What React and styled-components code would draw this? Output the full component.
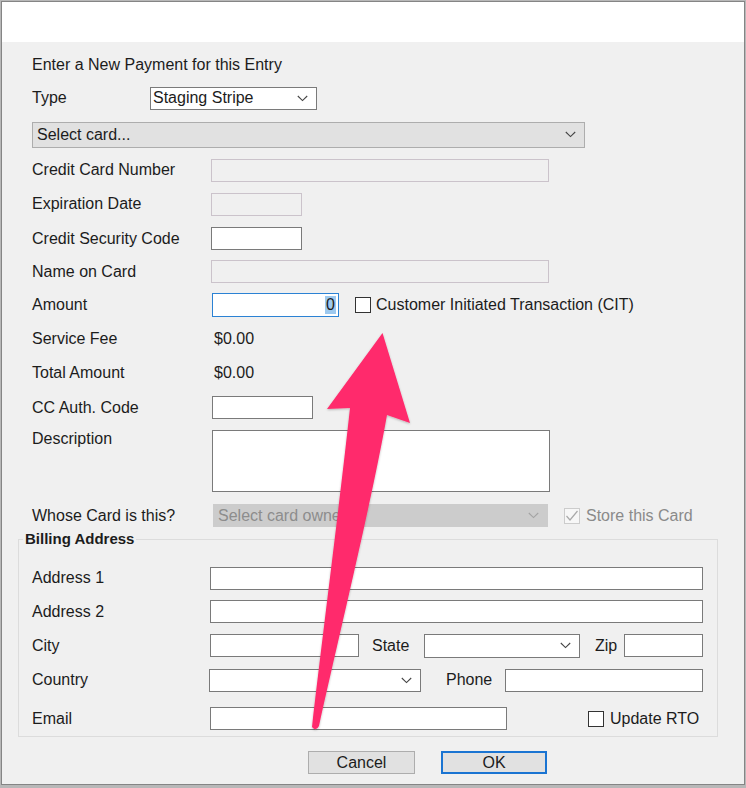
import React from 'react';
import styled, { createGlobalStyle } from 'styled-components';

const GlobalStyle = createGlobalStyle`
  html, body {
    margin: 0;
    padding: 0;
    background: #b8b8b8;
  }
  body {
    font-family: "Liberation Sans", Arial, sans-serif;
    font-size: 16px;
    color: #1c1c1c;
  }
`;

const Screen = styled.div`
  position: relative;
  width: 746px;
  height: 788px;
  overflow: hidden;
`;

const Window = styled.div`
  margin: 1px 0 0 1px;
  width: 744px;
  height: 784px;
  box-sizing: border-box;
  border: 1px solid #858585;
  background: #f0f0f0;
  display: flex;
  flex-direction: column;
`;

const TitleBar = styled.div`
  height: 40px;
  background: #ffffff;
  flex: none;
`;

const Body = styled.div`
  flex: 1;
  padding-left: 16px;
  display: flex;
  flex-direction: column;
`;

const Form = styled.div`
  padding: 7px 0 0 14px;
  display: flex;
  flex-direction: column;
`;

const Row = styled.div`
  display: flex;
  align-items: ${(p) => (p.$top ? 'flex-start' : 'center')};
  height: ${(p) => p.$h}px;
  padding-top: ${(p) => p.$pt || 0}px;
  box-sizing: border-box;
`;

const Label = styled.span`
  flex: none;
  width: ${(p) => p.$w || 179}px;
  margin-left: ${(p) => p.$ml || 0}px;
  line-height: 18px;
  white-space: nowrap;
  color: ${(p) => (p.$muted ? '#8a8a8a' : '#1c1c1c')};
`;

const Heading = styled.span`
  line-height: 18px;
`;

const Value = styled.span`
  line-height: 18px;
`;

const TextBox = styled.div`
  flex: none;
  width: ${(p) => p.$w}px;
  height: ${(p) => p.$h || 23}px;
  box-sizing: border-box;
  border: 1px solid
    ${(p) => (p.$disabled ? '#cbc3cb' : p.$focus ? '#2b82d4' : '#7a7a7a')};
  background: ${(p) => (p.$disabled ? '#f0f0f0' : '#ffffff')};
  display: flex;
  align-items: center;
  justify-content: flex-end;
  padding-right: 2px;
`;

const Selected = styled.span`
  background: #9dc9ef;
  line-height: 18px;
  padding: 0 1px;
`;

const Combo = styled.div`
  flex: none;
  width: ${(p) => p.$w}px;
  height: ${(p) => p.$h || 23}px;
  box-sizing: border-box;
  border: 1px solid ${(p) => p.$border || '#7a7a7a'};
  background: ${(p) => p.$bg || '#ffffff'};
  color: ${(p) => p.$color || '#1c1c1c'};
  display: flex;
  align-items: center;
  justify-content: space-between;
  padding: 0 8px 0 ${(p) => p.$pl || 2}px;
  white-space: nowrap;
  overflow: hidden;
`;

const Box = styled.span`
  flex: none;
  width: 16px;
  height: 16px;
  box-sizing: border-box;
  margin-left: ${(p) => p.$ml || 0}px;
  border: 1px solid ${(p) => (p.$disabled ? '#cccccc' : '#333333')};
  background: ${(p) => (p.$disabled ? '#f7f7f7' : '#ffffff')};
  display: flex;
  align-items: center;
  justify-content: center;
`;

const CheckText = styled.span`
  margin-left: ${(p) => p.$ml || 5}px;
  line-height: 18px;
  white-space: nowrap;
  color: ${(p) => (p.$muted ? '#8a8a8a' : '#1c1c1c')};
`;

const Group = styled.fieldset`
  margin: 0;
  width: 700px;
  box-sizing: border-box;
  border: 1px solid #dcdcdc;
  padding: 17px 0 0 13px;
  height: 203px;
`;

const Legend = styled.legend`
  margin-left: -9px;
  padding: 0 2px;
  font-weight: bold;
  font-size: 15px;
  line-height: 10px;
  color: #1c1c1c;
`;

const ButtonBar = styled.div`
  display: flex;
  gap: 26px;
  padding: 14px 0 0 290px;
`;

const Button = styled.div`
  width: ${(p) => p.$w}px;
  height: 23px;
  box-sizing: border-box;
  border: ${(p) => (p.$primary ? '2px solid #1a74d2' : '1px solid #adadad')};
  background: #e1e1e1;
  display: flex;
  align-items: center;
  justify-content: center;
  line-height: 18px;
`;

const Overlay = styled.svg`
  position: absolute;
  left: 0;
  top: 0;
  pointer-events: none;
`;

const Chevron = ({ color = '#444' }) => (
  <svg width="11" height="7" viewBox="0 0 11 7">
    <path d="M0.8 1 L5.5 5.6 L10.2 1" fill="none" stroke={color} strokeWidth="1.1" />
  </svg>
);

const Tick = () => (
  <svg width="14" height="12" viewBox="0 0 14 12">
    <path d="M1.5 6 L5 10 L12.5 1" fill="none" stroke="#a9a9a9" strokeWidth="1.2" />
  </svg>
);

const App = () => {
  return (
    <Screen>
      <GlobalStyle />
      <Window>
        <TitleBar />
        <Body>
          <Form>
            <Row $h={32}>
              <Heading>Enter a New Payment for this Entry</Heading>
            </Row>
            <Row $h={34}>
              <Label $w={118}>Type</Label>
              <Combo $w={167}>
                Staging Stripe
                <Chevron />
              </Combo>
            </Row>
            <Row $h={39}>
              <Combo $w={553} $h={26} $bg="#e1e1e1" $border="#adadad" $pl={4}>
                Select card...
                <Chevron />
              </Combo>
            </Row>
            <Row $h={32}>
              <Label>Credit Card Number</Label>
              <TextBox $w={338} $disabled />
            </Row>
            <Row $h={36}>
              <Label>Expiration Date</Label>
              <TextBox $w={91} $disabled />
            </Row>
            <Row $h={33}>
              <Label>Credit Security Code</Label>
              <TextBox $w={91} />
            </Row>
            <Row $h={33}>
              <Label>Name on Card</Label>
              <TextBox $w={338} $disabled />
            </Row>
            <Row $h={34}>
              <Label $w={180}>Amount</Label>
              <TextBox $w={127} $h={24} $focus>
                <Selected>0</Selected>
              </TextBox>
              <Box $ml={16} />
              <CheckText>Customer Initiated Transaction (CIT)</CheckText>
            </Row>
            <Row $h={34}>
              <Label $w={182}>Service Fee</Label>
              <Value>$0.00</Value>
            </Row>
            <Row $h={33}>
              <Label $w={182}>Total Amount</Label>
              <Value>$0.00</Value>
            </Row>
            <Row $h={37}>
              <Label $w={180}>CC Auth. Code</Label>
              <TextBox $w={101} />
            </Row>
            <Row $h={71} $top $pt={4}>
              <Label $w={180}>Description</Label>
              <TextBox $w={338} $h={62} />
            </Row>
            <Row $h={37}>
              <Label $w={181}>Whose Card is this?</Label>
              <Combo $w={335} $bg="#cccccc" $border="#cccccc" $color="#8d8d8d" $pl={4}>
                Select card owner
                <Chevron color="#a3a3a3" />
              </Combo>
              <Box $ml={16} $disabled>
                <Tick />
              </Box>
              <CheckText $ml={6} $muted>Store this Card</CheckText>
            </Row>
          </Form>

          <Group>
            <Legend>Billing Address</Legend>
            <Row $h={34}>
              <Label $w={178}>Address 1</Label>
              <TextBox $w={493} />
            </Row>
            <Row $h={33}>
              <Label $w={178}>Address 2</Label>
              <TextBox $w={493} />
            </Row>
            <Row $h={35}>
              <Label $w={178}>City</Label>
              <TextBox $w={149} />
              <Label $w={52} $ml={13}>State</Label>
              <Combo $w={156} $h={24}>
                <span />
                <Chevron />
              </Combo>
              <Label $w={29} $ml={15}>Zip</Label>
              <TextBox $w={79} />
            </Row>
            <Row $h={34}>
              <Label $w={177}>Country</Label>
              <Combo $w={212}>
                <span />
                <Chevron />
              </Combo>
              <Label $w={59} $ml={25}>Phone</Label>
              <TextBox $w={198} />
            </Row>
            <Row $h={39} $pt={4}>
              <Label $w={178}>Email</Label>
              <TextBox $w={297} />
              <Box $ml={81} />
              <CheckText $ml={6}>Update RTO</CheckText>
            </Row>
          </Group>

          <ButtonBar>
            <Button $w={107}>Cancel</Button>
            <Button $w={106} $primary>OK</Button>
          </ButtonBar>
        </Body>
      </Window>

      <Overlay width="746" height="788" viewBox="0 0 746 788">
        <defs>
          <filter id="shadow" x="-20%" y="-10%" width="140%" height="120%">
            <feDropShadow dx="0" dy="1" stdDeviation="1" floodColor="#000" floodOpacity="0.25" />
          </filter>
        </defs>
        <path
          d="M382.5 333 L410 423 L387 415 C372 500, 338 640, 319 726 Q316 732 312 727 C322 640, 340 500, 350 408 L327 409 Z"
          fill="#ff2b6c"
          filter="url(#shadow)"
        />
      </Overlay>
    </Screen>
  );
};

export default App;
